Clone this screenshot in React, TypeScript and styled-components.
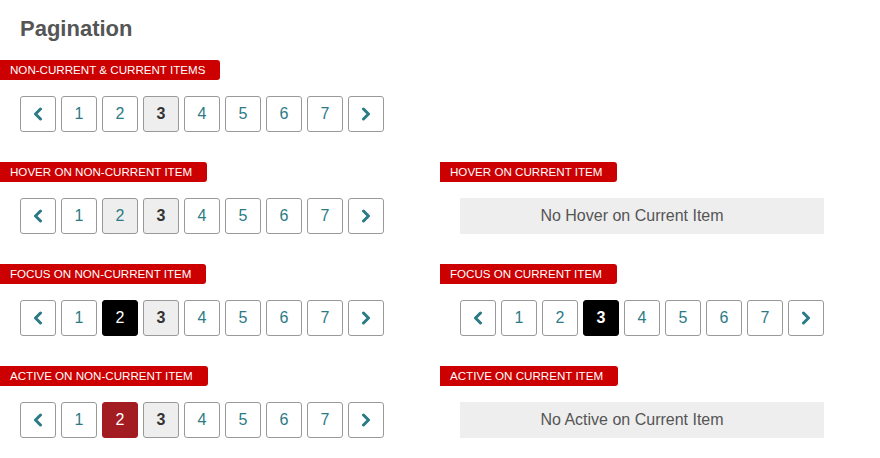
import React from 'react';
import styled, {createGlobalStyle} from 'styled-components';

const GlobalStyle = createGlobalStyle`
  body {
    margin: 0;
    background: #fff;
    font-family: "Liberation Sans", Arial, sans-serif;
  }
`;

const Page = styled.div`
  padding-top: 16px;
`;

const Title = styled.h1`
  margin: 0 0 18px 20px;
  font-size: 22px;
  line-height: 26px;
  font-weight: bold;
  color: #555;
`;

const Grid = styled.div`
  display: grid;
  grid-template-columns: 440px 440px;
  row-gap: 30px;
`;

const Section = styled.div`
  display: flex;
  flex-direction: column;
  align-items: flex-start;
  gap: 16px;
`;

const Label = styled.div`
  background: #cc0000;
  color: #fff;
  font-size: 11.6px;
  line-height: 20px;
  height: 20px;
  padding: 0 15px 0 10px;
  border-radius: 0 3px 3px 0;
  text-transform: uppercase;
  white-space: nowrap;
`;

const Pager = styled.div`
  display: flex;
  gap: 5px;
  margin-left: 20px;
`;

type Look = 'plain' | 'current' | 'hover' | 'focus' | 'focusCurrent' | 'active';

const looks: Record<Look, {bg: string; fg: string; border: string; weight: string}> = {
  plain: {bg: '#fff', fg: '#2b7a84', border: '#999', weight: 'normal'},
  current: {bg: '#eee', fg: '#333', border: '#999', weight: 'bold'},
  hover: {bg: '#eee', fg: '#2b7a84', border: '#999', weight: 'normal'},
  focus: {bg: '#000', fg: '#fff', border: '#000', weight: 'normal'},
  focusCurrent: {bg: '#000', fg: '#fff', border: '#000', weight: 'bold'},
  active: {bg: '#a31c21', fg: '#fff', border: '#a31c21', weight: 'normal'},
};

const Item = styled.div<{$look: Look}>`
  box-sizing: border-box;
  width: 36px;
  height: 36px;
  display: flex;
  align-items: center;
  justify-content: center;
  border: 1px solid ${p => looks[p.$look].border};
  border-radius: 3px;
  background: ${p => looks[p.$look].bg};
  color: ${p => looks[p.$look].fg};
  font-weight: ${p => looks[p.$look].weight};
  font-size: 16px;
`;

const Notice = styled.div`
  box-sizing: border-box;
  margin-left: 20px;
  width: 364px;
  height: 36px;
  padding-right: 20px;
  background: #eee;
  color: #555;
  font-size: 16px;
  display: flex;
  align-items: center;
  justify-content: center;
`;

const Chevron = ({dir}: {dir: 'left' | 'right'}) => (
  <svg width="10" height="14" viewBox="0 0 10 14">
    <polyline
      points={dir === 'left' ? '7.5,2 2.5,7 7.5,12' : '2.5,2 7.5,7 2.5,12'}
      fill="none"
      stroke="#2b7a84"
      strokeWidth="3"
      strokeLinecap="round"
      strokeLinejoin="round"
    />
  </svg>
);

const Pagination = ({special, look}: {special?: number; look?: Look}) => (
  <Pager>
    <Item $look="plain"><Chevron dir="left" /></Item>
    {[1, 2, 3, 4, 5, 6, 7].map(n => {
      let l: Look = n === 3 ? 'current' : 'plain';
      if (special === n && look) l = look;
      return <Item key={n} $look={l}>{n}</Item>;
    })}
    <Item $look="plain"><Chevron dir="right" /></Item>
  </Pager>
);

export default function App() {
  return <>
    <GlobalStyle />
    <Page>
      <Title>Pagination</Title>
      <Grid>
        <Section>
          <Label>Non-current &amp; current items</Label>
          <Pagination />
        </Section>
        <div />
        <Section>
          <Label>Hover on non-current item</Label>
          <Pagination special={2} look="hover" />
        </Section>
        <Section>
          <Label>Hover on current item</Label>
          <Notice>No Hover on Current Item</Notice>
        </Section>
        <Section>
          <Label>Focus on non-current item</Label>
          <Pagination special={2} look="focus" />
        </Section>
        <Section>
          <Label>Focus on current item</Label>
          <Pagination special={3} look="focusCurrent" />
        </Section>
        <Section>
          <Label>Active on non-current item</Label>
          <Pagination special={2} look="active" />
        </Section>
        <Section>
          <Label>Active on current item</Label>
          <Notice>No Active on Current Item</Notice>
        </Section>
      </Grid>
    </Page>
  </>;
}
